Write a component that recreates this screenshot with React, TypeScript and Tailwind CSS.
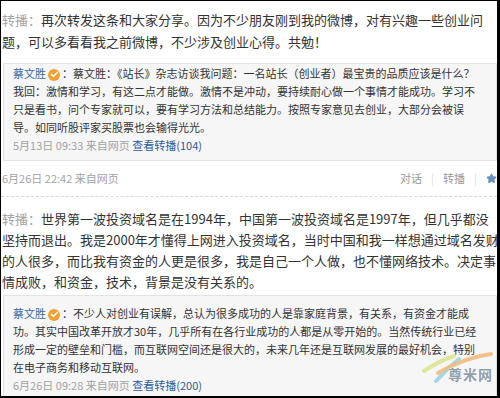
import { Check, Star } from 'lucide-react';

const font = { fontFamily: '"Noto Sans CJK SC", "Noto Sans", sans-serif' };

function VBadge() {
  return (
    <span className="mx-[2px] inline-flex h-[12px] w-[12px] translate-y-[1px] items-center justify-center rounded-full bg-[#f0a132]">
      <Check className="h-[9px] w-[9px] text-white" strokeWidth={4} />
    </span>
  );
}

function Line({ children }: { children: React.ReactNode }) {
  return <div className="overflow-hidden whitespace-nowrap">{children}</div>;
}

function Quote({ lines, time, count, top }: { lines: string[]; time: string; count: number; top: string }) {
  return (
    <div className={`ml-[2px] border border-[#e3e3e3] bg-[#f6f6f6] pb-[6px] pl-[9px] text-[11px] leading-[18px] text-[#333] ${top}`}>
      <Line>
        <span className="text-[#3a67a5]">蔡文胜</span>
        <VBadge />
        ：{lines[0]}
      </Line>
      {lines.slice(1).map((l) => (
        <Line key={l}>{l}</Line>
      ))}
      <Line>
        <span className="text-[#a3a3a3]">{time} 来自网页</span>{' '}
        <span className="text-[#2c5b98]">查看转播({count})</span>
      </Line>
    </div>
  );
}

export default function App() {
  return (
    <div
      className="relative h-[398px] w-[500px] overflow-hidden border-t border-b-2 border-l border-r-[3px] border-black bg-white"
      style={font}
    >
      <div className="border-b border-dashed border-[#d8d8d8] pb-[9px]">
        <div className="pl-[1px] pt-[8px] text-[13px] leading-[22px] text-[#333]">
          <Line>
            <span className="text-[#a5a5a5]">转播：</span>再次转发这条和大家分享。因为不少朋友刚到我的微博，对有兴趣一些创业问
          </Line>
          <Line>题，可以多看看我之前微博，不少涉及创业心得。共勉！</Line>
        </div>
        <Quote
          top="mt-[10px] pt-0"
          lines={[
            '蔡文胜：《站长》杂志访谈我问题：一名站长（创业者）最宝贵的品质应该是什么？',
            '我回：激情和学习，有这二点才能做。激情不是冲动，要持续耐心做一个事情才能成功。学习不',
            '只是看书，问个专家就可以，要有学习方法和总结能力。按照专家意见去创业，大部分会被误',
            '导。如同听股评家买股票也会输得光光。',
          ]}
          time="5月13日 09:33"
          count={104}
        />
        <div className="mt-[8px] flex items-center justify-between pl-[1px] text-[11px] leading-[18px] text-[#a3a3a3]">
          <span>6月26日 22:42 来自网页</span>
          <div className="flex items-center gap-[9px] pr-0 text-[#9a9a9a]">
            <span>对话</span>
            <span className="text-[#dcdcdc]">|</span>
            <span>转播</span>
            <span className="text-[#dcdcdc]">|</span>
            <Star className="h-[11px] w-[11px] text-[#6b8fc0]" fill="#6b8fc0" />
          </div>
        </div>
      </div>

      <div className="mt-[11px] pl-[1px] text-[13px] leading-[21px] text-[#333]">
        <Line>
          <span className="text-[#a5a5a5]">转播：</span>世界第一波投资域名是在1994年，中国第一波投资域名是1997年，但几乎都没
        </Line>
        <Line>坚持而退出。我是2000年才懂得上网进入投资域名，当时中国和我一样想通过域名发财</Line>
        <Line>的人很多，而比我有资金的人更是很多，我是自己一个人做，也不懂网络技术。决定事</Line>
        <Line>情成败，和资金，技术，背景是没有关系的。</Line>
      </div>
      <Quote
        top="mt-[3px] pt-[8px]"
        lines={[
          '不少人对创业有误解，总认为很多成功的人是靠家庭背景，有关系，有资金才能成',
          '功。其实中国改革开放才30年，几乎所有在各行业成功的人都是从零开始的。当然传统行业已经',
          '形成一定的壁垒和门槛，而互联网空间还是很大的，未来几年还是互联网发展的最好机会，特别',
          '在电子商务和移动互联网。',
        ]}
        time="6月26日 09:28"
        count={200}
      />

      <div className="absolute left-[420px] top-[350px] h-[36px] w-[74px]">
        <svg width="74" height="36" viewBox="0 0 74 36" className="absolute left-0 top-0">
          <path d="M3 20 Q18 10 33 5" stroke="#d9e48a" strokeWidth="4" fill="none" strokeLinecap="round" opacity="0.85" />
          <path d="M15 30 Q26 18 38 8" stroke="#8fd3e6" strokeWidth="4" fill="none" strokeLinecap="round" opacity="0.85" />
          <path d="M17 22 Q45 6 70 3" stroke="#f2b878" strokeWidth="4" fill="none" strokeLinecap="round" opacity="0.85" />
        </svg>
        <span
          className="absolute left-[27px] top-[15px] text-[14px] font-bold leading-[16px] tracking-[1px] text-[#8f9ea8]"
          style={{ textShadow: '0 0 2px #fff, 0 0 2px #fff' }}
        >
          尊米网
        </span>
      </div>
    </div>
  );
}
